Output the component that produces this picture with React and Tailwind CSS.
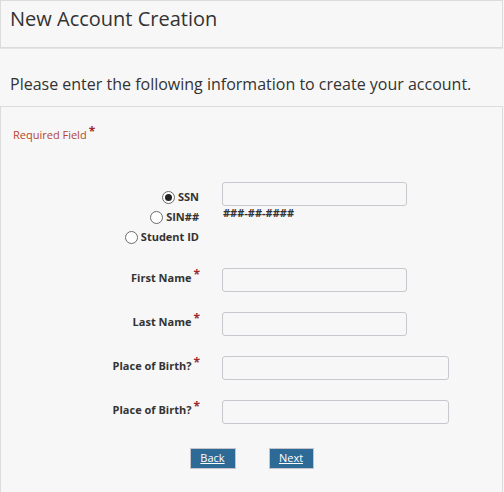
import React from "react";

const Star = () => (
  <span className="relative -top-[3px] ml-[2px] text-[12px] font-bold text-[#9b2b2b]">*</span>
);

const Radio = ({ checked, label }) => (
  <label className="flex h-[20px] items-center justify-end gap-[3px]">
    <span className="flex h-[13px] w-[13px] items-center justify-center rounded-full border border-[#6b6b6b] bg-white">
      {checked && <span className="h-[7px] w-[7px] rounded-full bg-[#222]" />}
    </span>
    <span className="font-bold text-[#333]">{label}</span>
  </label>
);

const Field = ({ label, wide }) => (
  <div className="mt-[20px] grid grid-cols-[199px_1fr] gap-x-[22px]">
    <div className="pt-[2px] text-right font-bold leading-[15px] text-[#333]">
      {label}
      <Star />
    </div>
    <input
      type="text"
      className={`h-[24px] rounded-[3px] border border-[#cbc6cd] bg-[#f7f7f7] ${wide ? "w-[227px]" : "w-[185px]"}`}
    />
  </div>
);

export default function App() {
  return (
    <div className="h-[492px] overflow-hidden bg-[#f7f7f7] font-['Open_Sans',sans-serif] text-[#333]">
      {/* Title */}
      <div className="h-[48px] w-[503px] border border-[#dcdcdc] px-[9px] pt-[4px] shadow-[0_1px_0_#e4e4e4]">
        <h1 className="text-[20px] leading-[28px] text-[#333]">New Account Creation</h1>
      </div>

      <p className="px-[10px] pt-[25px] pb-[11px] text-[16px] leading-[22px] text-[#333]">
        Please enter the following information to create your account.
      </p>

      {/* Form panel */}
      <div className="h-[387px] w-[503px] border border-b-0 border-[#dcdcdc] pt-[20px] text-[11px]">
        <div className="px-[12px] leading-[15px] text-[#b5452f]">
          Required Field
          <Star />
        </div>

        <div className="mt-[40px] grid grid-cols-[199px_1fr] gap-x-[22px]">
          <div className="mt-[5px] pr-[1px]">
            <Radio checked label="SSN" />
            <Radio label="SIN##" />
            <Radio label="Student ID" />
          </div>
          <div>
            <input
              type="text"
              className="h-[24px] w-[185px] rounded-[3px] border border-[#cbc6cd] bg-[#f7f7f7]"
            />
            <div className="pl-[1px] font-bold leading-[14px] text-[#333]">###-##-####</div>
          </div>
        </div>

        <div className="pt-[1px]">
          <Field label="First Name" />
          <Field label="Last Name" />
          <Field label="Place of Birth?" wide />
          <Field label="Place of Birth?" wide />
        </div>

        <div className="mt-[24px] flex justify-center gap-[33px]">
          <button className="h-[21px] w-[46px] border border-[#c6c3cc] bg-[#2e6a96] text-[11px] text-white underline">
            Back
          </button>
          <button className="h-[21px] w-[45px] border border-[#c6c3cc] bg-[#2e6a96] text-[11px] text-white underline">
            Next
          </button>
        </div>
      </div>
    </div>
  );
}
